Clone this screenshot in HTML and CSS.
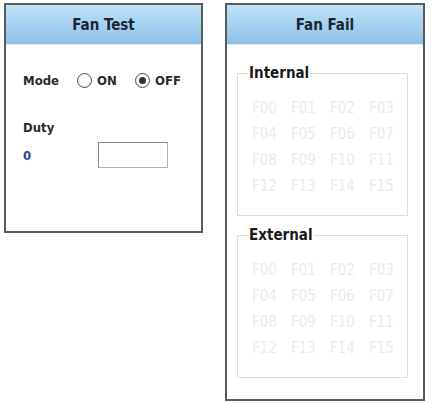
FILE: index.html
```html
<!DOCTYPE html>
<html>
<head>
<meta charset="utf-8">
<link rel="stylesheet" href="styles.css">
</head>
<body>
<div class="page">
  <div class="panel panel-test">
    <div class="header">Fan Test</div>
    <div class="test-body">
      <div class="mode-row">
        <span class="label mode-label">Mode</span>
        <span class="radio"></span><span class="label opt">ON</span>
        <span class="radio checked"></span><span class="label opt">OFF</span>
      </div>
      <div class="label duty-label">Duty</div>
      <div class="duty-row">
        <span class="value">0</span>
        <span class="input"></span>
      </div>
    </div>
  </div>
  <div class="panel panel-fail">
    <div class="header">Fan Fail</div>
    <div class="fail-body">
      <fieldset class="group">
        <legend>Internal</legend>
        <div class="grid">
          <span>F00</span><span>F01</span><span>F02</span><span>F03</span>
          <span>F04</span><span>F05</span><span>F06</span><span>F07</span>
          <span>F08</span><span>F09</span><span>F10</span><span>F11</span>
          <span>F12</span><span>F13</span><span>F14</span><span>F15</span>
        </div>
      </fieldset>
      <fieldset class="group">
        <legend>External</legend>
        <div class="grid">
          <span>F00</span><span>F01</span><span>F02</span><span>F03</span>
          <span>F04</span><span>F05</span><span>F06</span><span>F07</span>
          <span>F08</span><span>F09</span><span>F10</span><span>F11</span>
          <span>F12</span><span>F13</span><span>F14</span><span>F15</span>
        </div>
      </fieldset>
    </div>
  </div>
</div>
</body>
</html>
```

FILE: styles.css
```css
html, body {
  margin: 0;
  padding: 0;
  background: #ffffff;
}
body {
  font-family: "DejaVu Sans Condensed", "DejaVu Sans", sans-serif;
  color: #222;
}
.page {
  display: flex;
  align-items: flex-start;
  gap: 22px;
  padding: 3px 0 0 4px;
}
.panel {
  box-sizing: border-box;
  border: 2px solid #5a5a5a;
  background: #fff;
  display: flex;
  flex-direction: column;
}
.panel-test {
  width: 199px;
  height: 230px;
}
.panel-fail {
  width: 200px;
  height: 398px;
}
.header {
  height: 40px;
  background: linear-gradient(to bottom, #bde3f5 0%, #a6d3f0 50%, #8dbfe8 100%);
  border-bottom: 1px solid #e4f0f8;
  box-sizing: border-box;
  display: flex;
  align-items: center;
  justify-content: center;
  font-weight: bold;
  font-size: 15px;
  color: #1b2533;
}
.label {
  font-weight: bold;
  font-size: 13px;
  color: #2a2a2a;
}
.test-body {
  padding: 25px 0 0 17px;
  display: flex;
  flex-direction: column;
}
.mode-row {
  display: flex;
  align-items: center;
  height: 20px;
}
.mode-label {
  width: 54px;
}
.radio {
  box-sizing: border-box;
  width: 15px;
  height: 15px;
  border-radius: 50%;
  border: 1px solid #4a4a4a;
  background: radial-gradient(circle at 50% 40%, #ffffff 40%, #e6e6e6 100%);
  display: flex;
  align-items: center;
  justify-content: center;
  margin-right: 5px;
}
.radio.checked::after {
  content: "";
  width: 7px;
  height: 7px;
  border-radius: 50%;
  background: #333;
}
.opt {
  width: 38px;
}
.duty-label {
  margin-top: 29px;
  height: 18px;
  line-height: 18px;
}
.duty-row {
  margin-top: 5px;
  display: flex;
  align-items: center;
  height: 26px;
}
.value {
  width: 75px;
  font-weight: bold;
  font-size: 13px;
  color: #3242a0;
}
.input {
  box-sizing: border-box;
  width: 70px;
  height: 26px;
  border: 1px solid #8a8a8a;
  border-right-color: #b0b0b0;
  border-bottom-color: #b0b0b0;
  background: #fff;
}
.fail-body {
  padding: 19px 15px 0 10px;
  display: flex;
  flex-direction: column;
  gap: 10px;
}
.group {
  margin: 0;
  padding: 13px 0 16px 14px;
  border: 1px solid #dedede;
  min-width: 0;
}
.group legend {
  padding: 0 1px;
  margin-left: -4px;
  font-weight: bold;
  font-size: 15px;
  line-height: 18px;
  color: #1a1a1a;
}
.grid {
  display: grid;
  grid-template-columns: repeat(4, 39px);
  grid-auto-rows: 26px;
  align-items: center;
  font-size: 15px;
  color: #ebebeb;
}
```
